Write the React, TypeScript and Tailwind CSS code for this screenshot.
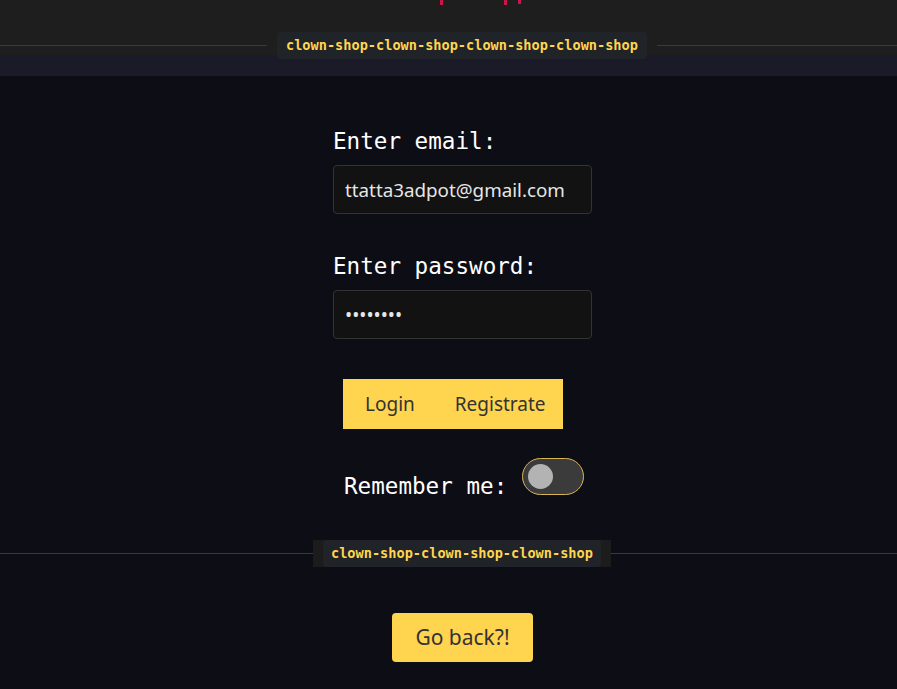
import React from "react";

const mono = { fontFamily: '"DejaVu Sans Mono", monospace' } as const;

function Divider({ left, text, outer }: { left: number; text: string; outer?: boolean }) {
  return (
    <div className="flex items-center h-[27px]">
      <div className="h-px bg-[#3a3a3a]" style={{ width: left }} />
      {outer ? (
        <div className="bg-[#1c1c1c] px-[10px] h-[27px] flex items-center">
          <div className="h-[27px] px-[8px] rounded-[4px] bg-[#202327] flex items-center text-[13.6px] font-bold text-[#ffd54f]" style={mono}>
            {text}
          </div>
        </div>
      ) : (
        <div className="mx-[10px] h-[27px] px-[9px] rounded-[4px] bg-[#202327] flex items-center text-[13.6px] font-bold text-[#ffd54f]" style={mono}>
          {text}
        </div>
      )}
      <div className="flex-1 h-px bg-[#3a3a3a]" />
    </div>
  );
}

export default function App() {
  return (
    <div className="min-h-[689px] bg-[#0d0d15] overflow-hidden">
      <div className="relative h-[76px] pt-[32px] bg-[linear-gradient(to_bottom,#1e1e1e_55px,#1b1a28_55px)]">
        <div className="absolute left-[440px] top-0 w-[3px] h-[5px] bg-[#c8164a]" />
        <div className="absolute left-[504px] top-0 w-[3px] h-[5px] bg-[#c8164a]" />
        <div className="absolute left-[518px] top-0 w-[3px] h-[4px] bg-[#c8164a]" />
        <Divider left={267} text="clown-shop-clown-shop-clown-shop-clown-shop" />
      </div>

      <div className="flex justify-center pl-[28px]">
        <div className="w-[259px] flex flex-col pt-[52px]">
          <div className="text-[22.6px] leading-[26px] text-white" style={mono}>Enter email:</div>
          <input
            readOnly
            value="ttatta3adpot@gmail.com"
            className="mt-[11px] h-[49px] w-[259px] rounded-[4px] border border-[#333333] bg-[#121212] px-[11px] text-[18.8px] text-[#e6e6e6] outline-none"
            style={{ fontFamily: '"Noto Sans", sans-serif' }}
          />
          <div className="mt-[39px] text-[22.6px] leading-[26px] text-white" style={mono}>Enter password:</div>
          <input
            readOnly
            type="password"
            value="12345678"
            className="mt-[11px] h-[49px] w-[259px] rounded-[4px] border border-[#333333] bg-[#121212] px-[11px] text-[19px] text-[#e6e6e6] outline-none"
            style={{ fontFamily: '"Noto Sans", sans-serif' }}
          />
          <div className="mt-[40px] ml-[10px] flex h-[50px] w-[220px] bg-[#ffd54f] text-[19px] text-[#333333]" style={{ fontFamily: '"Noto Sans", sans-serif' }}>
            <button className="pl-[22px] pr-[20px] h-full">Login</button>
            <button className="pl-[20px] h-full">Registrate</button>
          </div>
          <div className="mt-[29px] ml-[11px] flex items-end">
            <div className="text-[22.6px] leading-[26px] text-white mb-[-4px]" style={mono}>Remember me:</div>
            <div className="ml-[15px] w-[62px] h-[37px] rounded-full border border-[#d9b655] bg-[#3b3b3b] flex items-center pl-[5px]">
              <div className="w-[25px] h-[25px] rounded-full bg-[#b3b3b3]" />
            </div>
          </div>
        </div>
      </div>

      <div className="mt-[45px]">
        <Divider left={313} text="clown-shop-clown-shop-clown-shop" outer />
      </div>

      <div className="flex justify-center pl-[28px] mt-[46px]">
        <button
          className="h-[49px] w-[141px] rounded-[4px] bg-[#ffd54f] text-[21px] text-[#333333]"
          style={{ fontFamily: '"Noto Sans", sans-serif' }}
        >
          Go back?!
        </button>
      </div>
    </div>
  );
}
